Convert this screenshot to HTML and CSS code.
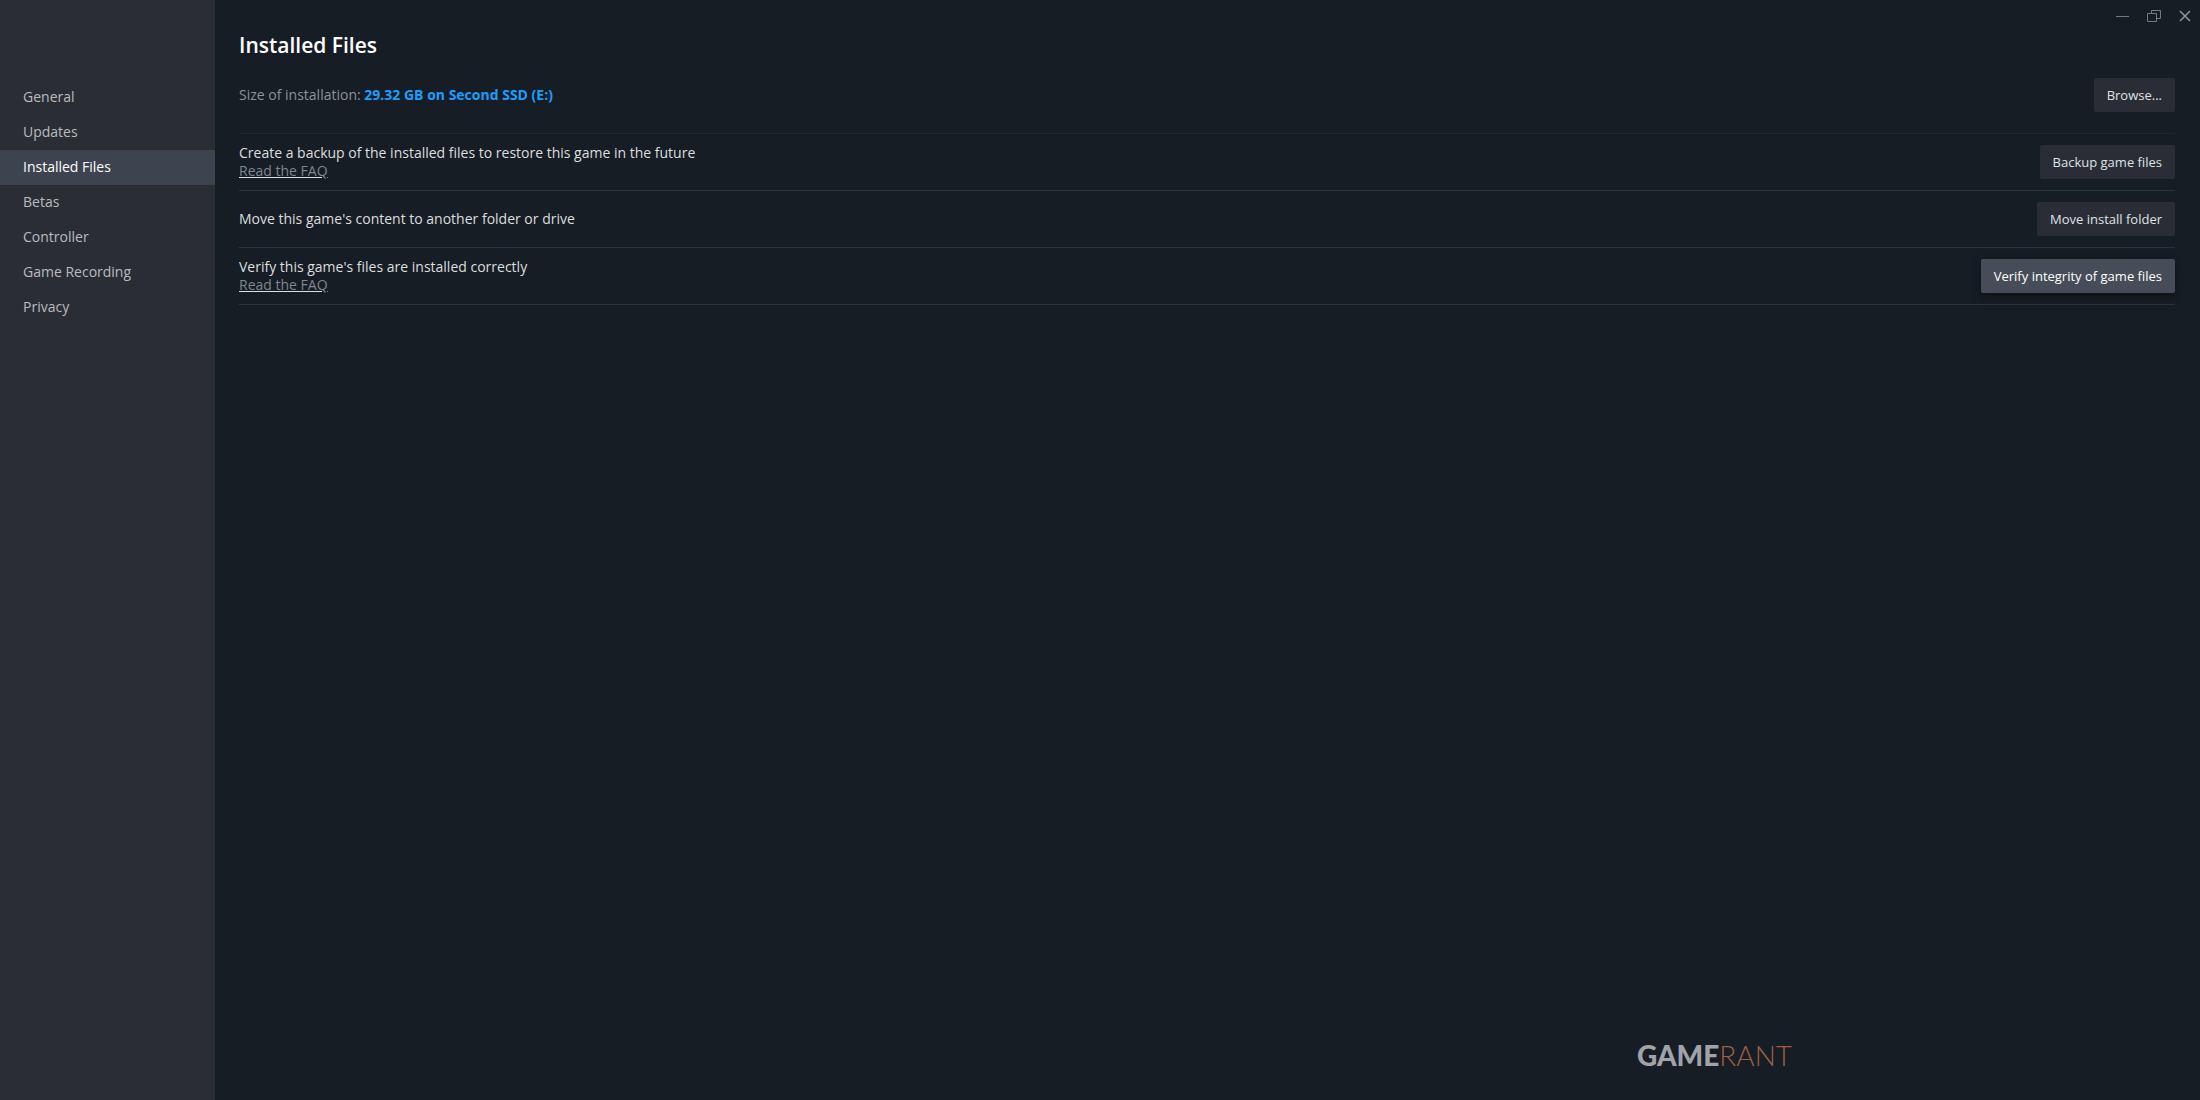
FILE: index.html
```
<!DOCTYPE html>
<html lang="en">
<head>
    <meta charset="UTF-8">
    <meta name="viewport" content="width=device-width, initial-scale=1.0">
    <title>Installed Files</title>
    <link rel="stylesheet" href="styles.css">
</head>
<body>
    <nav class="sidebar">
        <a href="#general">General</a>
        <a href="#updates">Updates</a>
        <a href="#installed" class="active">Installed Files</a>
        <a href="#betas">Betas</a>
        <a href="#controller">Controller</a>
        <a href="#recording">Game Recording</a>
        <a href="#privacy">Privacy</a>
    </nav>
    <main class="content" id="installed">
        <h1>Installed Files</h1>
        <div class="size-row">
            <p>Size of installation: <strong>29.32 GB on Second SSD (E:)</strong></p>
            <button class="btn">Browse...</button>
        </div>
        <div class="row">
            <div class="row-text">
                <p>Create a backup of the installed files to restore this game in the future</p>
                <a href="#backup-faq">Read the FAQ</a>
            </div>
            <button class="btn">Backup game files</button>
        </div>
        <div class="row">
            <div class="row-text">
                <p>Move this game's content to another folder or drive</p>
            </div>
            <button class="btn">Move install folder</button>
        </div>
        <div class="row">
            <div class="row-text">
                <p>Verify this game's files are installed correctly</p>
                <a href="#verify-faq">Read the FAQ</a>
            </div>
            <button class="btn btn-hover">Verify integrity of game files</button>
        </div>
    </main>
    <div class="window-controls">
        <button aria-label="Minimize">
            <svg width="14" height="14" viewBox="0 0 14 14"><path d="M0 7.5h13"/></svg>
        </button>
        <button aria-label="Restore">
            <svg width="14" height="14" viewBox="0 0 14 14"><path d="M.5 4.5h9v8h-9zM4.5 4.5v-3h9v8h-4"/></svg>
        </button>
        <button aria-label="Close">
            <svg class="close" width="14" height="14" viewBox="0 0 14 14"><path d="M2 2l10 10M12 2L2 12"/></svg>
        </button>
    </div>
    <div class="watermark"><b>GAME</b><span>RANT</span></div>
</body>
</html>
```
FILE: styles.css
```
* {
    box-sizing: border-box;
}
body {
    margin: 0;
    min-height: 100vh;
    display: flex;
    position: relative;
    background-color: #171d25;
    color: #dcdedf;
    font-family: "Open Sans", "Noto Sans", sans-serif;
    font-size: 14px;
    line-height: 18px;
}
h1, p {
    margin: 0;
}
.sidebar {
    flex: 0 0 215px;
    padding-top: 80px;
    background-color: #2b2d34;
}
.sidebar a {
    display: block;
    padding: 0 23px 1px;
    line-height: 34px;
    color: #b8bcbf;
    text-decoration: none;
}
.sidebar a.active {
    background-color: #3d4450;
    color: #fff;
}
.content {
    flex: 1;
    padding: 29px 25px 0 24px;
}
h1 {
    font-size: 21px;
    font-weight: 600;
    line-height: 32px;
    color: #fff;
}
.size-row, .row {
    display: flex;
    justify-content: space-between;
    align-items: center;
}
.size-row {
    height: 73px;
    padding-bottom: 4px;
    color: #8b929a;
    border-bottom: 1px solid #20262e;
}
.size-row strong {
    color: #1a9fff;
}
.row {
    height: 57px;
    border-bottom: 1px solid #2d333b;
}
.row-text a {
    display: inline-block;
    color: #7f868e;
    text-decoration-color: #dcdedf;
}
.btn {
    height: 34px;
    padding: 0 13px 1px;
    border: none;
    border-radius: 2px;
    background-color: #2a2d35;
    color: #dfe3e6;
    font-family: inherit;
    font-size: 13px;
    font-weight: 500;
    cursor: pointer;
}
.btn-hover, .btn:hover {
    background-color: #464d58;
    color: #fff;
    box-shadow: 0 4px 10px rgba(0, 0, 0, 0.4);
}
.window-controls {
    position: absolute;
    top: 9px;
    right: 8px;
    display: flex;
    gap: 17px;
}
.window-controls button {
    display: flex;
    padding: 0;
    border: none;
    background: none;
    cursor: pointer;
}
.window-controls svg {
    fill: none;
    stroke: #737b80;
}
.window-controls .close {
    stroke: #8f989d;
    stroke-width: 1.5;
}
.watermark {
    position: absolute;
    right: 408px;
    bottom: 27px;
    font-family: Lato, sans-serif;
    font-size: 28px;
    line-height: 36px;
    color: #a0a4a8;
}
.watermark b {
    font-weight: 900;
}
.watermark span {
    font-weight: 300;
    color: #9c5f42;
}
```
